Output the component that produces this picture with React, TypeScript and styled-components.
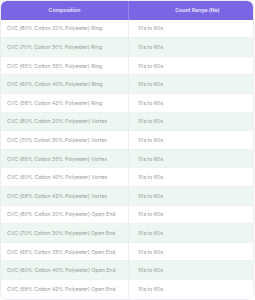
import React from "react";
import styled, { createGlobalStyle } from "styled-components";

const Global = createGlobalStyle`
  html, body { margin: 0; padding: 0; background: #ffffff; }
  body { font-family: Inter, "Noto Sans", sans-serif; }
`;

const Table = styled.div`
  width: 254px;
  border: 1px solid #ececf0;
  border-radius: 7px;
  overflow: hidden;
  box-sizing: border-box;
  display: flex;
  flex-direction: column;
`;

const Row = styled.div<{ $alt?: boolean; $head?: boolean }>`
  display: grid;
  grid-template-columns: 127px 1fr;
  height: 18.6px;
  background: ${(p) => (p.$head ? "#7a66e4" : p.$alt ? "#ebf7f0" : "#ffffff")};
  border-bottom: ${(p) => (p.$head ? "none" : "1px solid #f0f0f2")};
  box-sizing: border-box;
  &:last-child { border-bottom: none; }
`;

const Cell = styled.div<{ $head?: boolean; $second?: boolean }>`
  display: flex;
  align-items: center;
  justify-content: ${(p) => (p.$head ? "center" : "flex-start")};
  padding-left: ${(p) => (p.$head ? (p.$second ? "13px" : "0") : p.$second ? "9px" : "6px")};
  font-size: ${(p) => (p.$head ? "5.2px" : "5.2px")};
  font-weight: ${(p) => (p.$head ? 600 : 400)};
  color: ${(p) => (p.$head ? "#eeeaff" : "#999999")};
  white-space: nowrap;
  border-left: ${(p) => (p.$second ? (p.$head ? "1px solid #9584ea" : "1px solid #ececf0") : "none")};
`;

const types = ["Ring", "Vortex", "Open End"];
const mixes = [
  [80, 20],
  [70, 30],
  [65, 35],
  [60, 40],
  [58, 42],
];

export default function App() {
  const rows: string[] = [];
  types.forEach((t) =>
    mixes.forEach(([c, p]) => rows.push(`CVC (${c}% Cotton ${p}% Polyester) ${t}`))
  );
  return (
    <>
      <Global />
      <Table>
        <Row $head>
          <Cell $head>Composition</Cell>
          <Cell $head $second>Count Range (Ne)</Cell>
        </Row>
        {rows.map((r, i) => (
          <Row key={i} $alt={i % 2 === 1}>
            <Cell>{r}</Cell>
            <Cell $second>10s to 60s</Cell>
          </Row>
        ))}
      </Table>
    </>
  );
}
